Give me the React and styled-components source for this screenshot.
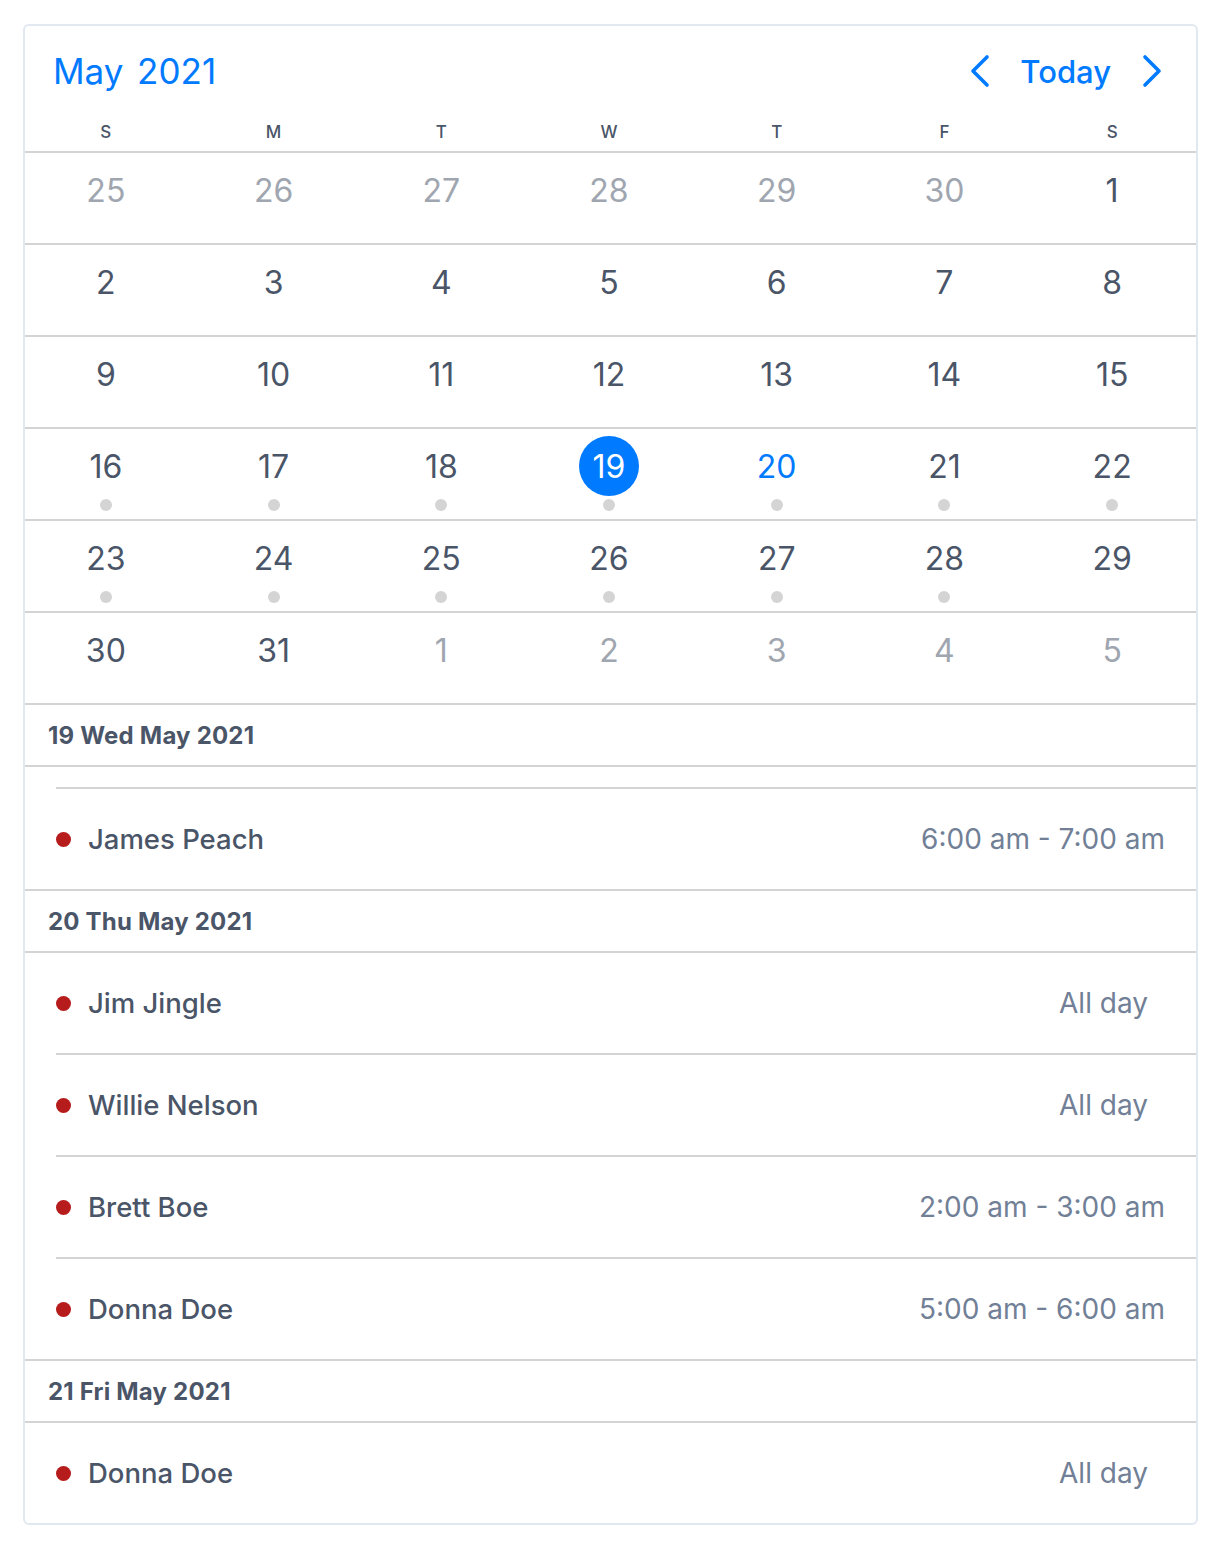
import React from "react";
import styled, { createGlobalStyle } from "styled-components";

const GlobalStyle = createGlobalStyle`
  html, body {
    margin: 0;
    padding: 0;
    background: #ffffff;
    font-family: Inter, "Noto Sans", "Liberation Sans", sans-serif;
  }
`;

const Page = styled.div`
  padding: 24px 22px 23px 23px;
`;

const Card = styled.div`
  width: 1175px;
  box-sizing: border-box;
  border: 2px solid #e2e8f0;
  border-radius: 6px;
  background: #fff;
  overflow: hidden;
`;

const HeaderBar = styled.div`
  height: 90px;
  display: flex;
  align-items: center;
  justify-content: space-between;
  padding: 0 33px 0 28px;
`;

const Title = styled.h1`
  margin: 0;
  font-size: 35px;
  font-weight: 400;
  color: #007aff;
  white-space: pre;
  word-spacing: -3px;
`;

const Nav = styled.div`
  display: flex;
  align-items: center;
  gap: 30px;
`;

const NavButton = styled.button`
  border: 0;
  background: none;
  padding: 0;
  display: flex;
  cursor: pointer;
`;

const TodayButton = styled.button`
  border: 0;
  background: none;
  padding: 0;
  font-family: inherit;
  font-size: 31px;
  font-weight: 500;
  color: #007aff;
  cursor: pointer;
`;

const WeekdayRow = styled.div`
  display: grid;
  grid-template-columns: repeat(7, 1fr);
  margin-left: -3px;
  height: 35px;
  border-bottom: 2px solid #d4d4d4;
`;

const Weekday = styled.div`
  text-align: center;
  font-size: 17px;
  font-weight: 500;
  color: #4a5568;
  line-height: 32px;
`;

const WeekRow = styled.div`
  display: grid;
  grid-template-columns: repeat(7, 1fr);
  margin-left: -3px;
  height: 90px;
  border-bottom: 2px solid #d4d4d4;
`;

const DayCell = styled.div`
  display: flex;
  flex-direction: column;
  align-items: center;
`;

const DayNumber = styled.div`
  margin-top: 7px;
  width: 60px;
  height: 60px;
  border-radius: 50%;
  display: flex;
  align-items: center;
  justify-content: center;
  font-size: 32px;
  font-weight: 400;
  background: ${(p) => (p.selected ? "#007aff" : "transparent")};
  color: ${(p) =>
    p.selected ? "#ffffff" : p.today ? "#007aff" : p.muted ? "#a0a6b0" : "#4a5568"};
`;

const EventDot = styled.div`
  margin-top: 3px;
  width: 12px;
  height: 12px;
  border-radius: 50%;
  background: ${(p) => (p.show ? "#d4d4d4" : "transparent")};
`;

const DayHeader = styled.div`
  height: 60px;
  display: flex;
  align-items: center;
  padding-left: 23px;
  font-size: 24px;
  font-weight: 700;
  letter-spacing: 0.2px;
  color: #4a5568;
  border-bottom: 2px solid #d4d4d4;
  border-top: ${(p) => (p.first ? "none" : "2px solid #d4d4d4")};
`;

const Spacer = styled.div`
  height: 20px;
`;

const EventRow = styled.div`
  margin-left: 31px;
  height: 100px;
  display: flex;
  align-items: center;
  padding-right: 31px;
  border-top: ${(p) => (p.divided ? "2px solid #d4d4d4" : "none")};
`;

const RedDot = styled.span`
  width: 15px;
  height: 15px;
  border-radius: 50%;
  background: #b71c1c;
  flex: none;
`;

const EventName = styled.span`
  margin-left: 17px;
  font-size: 27.5px;
  font-weight: 500;
  color: #4a5568;
  flex: 1;
`;

const EventTime = styled.span`
  font-size: 28px;
  font-weight: 400;
  color: #718096;
  margin-right: ${(p) => (p.allDay ? "17px" : "0")};
`;

const Chevron = ({ dir }) => (
  <svg width="22" height="34" viewBox="0 0 22 34" fill="none">
    <path
      d={dir === "left" ? "M19 3 L5 17 L19 31" : "M4 3 L18 17 L4 31"}
      stroke="#007aff"
      strokeWidth="3.6"
      strokeLinecap="round"
      strokeLinejoin="round"
    />
  </svg>
);

const weekdays = ["S", "M", "T", "W", "T", "F", "S"];

const weeks = [
  [[25, 1], [26, 1], [27, 1], [28, 1], [29, 1], [30, 1], [1, 0]],
  [[2], [3], [4], [5], [6], [7], [8]],
  [[9], [10], [11], [12], [13], [14], [15]],
  [[16, 0, 1], [17, 0, 1], [18, 0, 1], [19, 0, 1], [20, 0, 1], [21, 0, 1], [22, 0, 1]],
  [[23, 0, 1], [24, 0, 1], [25, 0, 1], [26, 0, 1], [27, 0, 1], [28, 0, 1], [29]],
  [[30], [31], [1, 1], [2, 1], [3, 1], [4, 1], [5, 1]],
];

const agenda = [
  {
    label: "19 Wed May 2021",
    spacer: true,
    events: [{ name: "James Peach", time: "6:00 am - 7:00 am" }],
  },
  {
    label: "20 Thu May 2021",
    events: [
      { name: "Jim Jingle", allDay: true },
      { name: "Willie Nelson", allDay: true },
      { name: "Brett Boe", time: "2:00 am - 3:00 am" },
      { name: "Donna Doe", time: "5:00 am - 6:00 am" },
    ],
  },
  {
    label: "21 Fri May 2021",
    events: [{ name: "Donna Doe", allDay: true }],
  },
];

const App = () => {
  return (
    <Page>
      <GlobalStyle />
      <Card>
        <HeaderBar>
          <Title>May  2021</Title>
          <Nav>
            <NavButton aria-label="Previous month">
              <Chevron dir="left" />
            </NavButton>
            <TodayButton>Today</TodayButton>
            <NavButton aria-label="Next month">
              <Chevron dir="right" />
            </NavButton>
          </Nav>
        </HeaderBar>

        <WeekdayRow>
          {weekdays.map((d, i) => (
            <Weekday key={i}>{d}</Weekday>
          ))}
        </WeekdayRow>

        {weeks.map((week, wi) => (
          <WeekRow key={wi}>
            {week.map(([n, muted, dot], di) => {
              const inMay = !muted;
              return (
                <DayCell key={di}>
                  <DayNumber
                    muted={muted}
                    selected={inMay && n === 19}
                    today={inMay && n === 20}
                  >
                    {n}
                  </DayNumber>
                  <EventDot show={dot} />
                </DayCell>
              );
            })}
          </WeekRow>
        ))}

        {agenda.map((group, gi) => (
          <div key={group.label}>
            <DayHeader first={gi === 0}>{group.label}</DayHeader>
            {group.spacer && <Spacer />}
            {group.events.map((ev, ei) => (
              <EventRow key={ei} divided={ei > 0 || group.spacer}>
                <RedDot />
                <EventName>{ev.name}</EventName>
                <EventTime allDay={ev.allDay}>
                  {ev.allDay ? "All day" : ev.time}
                </EventTime>
              </EventRow>
            ))}
          </div>
        ))}
      </Card>
    </Page>
  );
};

export default App;
